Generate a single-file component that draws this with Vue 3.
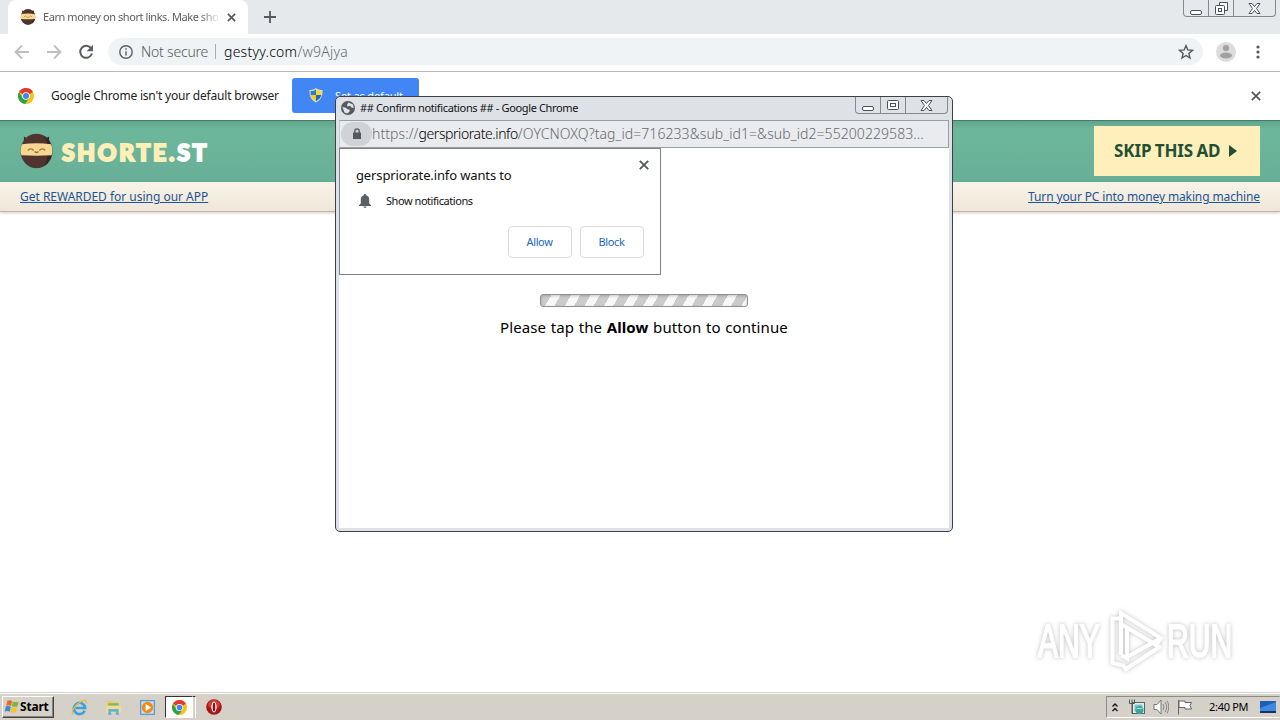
<template>
  <div class="desktop">
    <!-- main browser window -->
    <div class="tab-strip">
      <div class="tab">
        <svg class="tab-icon" viewBox="0 0 34 36">
          <use href="#ninja" />
        </svg>
        <span class="tab-title">Earn money on short links. Make sho</span>
        <svg class="tab-close" viewBox="0 0 10 10"><path d="M1 1l8 8M9 1L1 9" /></svg>
      </div>
      <svg class="tab-new" viewBox="0 0 12 12"><path d="M6 0v12M0 6h12" /></svg>
      <div class="win-buttons">
        <span class="wb wb-min"><svg viewBox="0 0 13 13"><rect x=".5" y="8.5" width="11" height="4" rx="1.5" /></svg></span>
        <span class="wb wb-max"><svg viewBox="0 0 13 13"><path d="M4.5 3V.5h8v8H10" /><rect x=".5" y="3.5" width="9" height="9" rx="1" /><rect x="3.5" y="6.5" width="3" height="3" /></svg></span>
        <span class="wb wb-close"><svg viewBox="0 0 13 13"><path :d="closeGlyph" /></svg></span>
      </div>
    </div>

    <div class="toolbar">
      <svg class="nav nav-off" viewBox="0 0 16 16"><path d="M15 8H2M8 1.5L1.5 8 8 14.5" /></svg>
      <svg class="nav nav-off" viewBox="0 0 16 16"><path d="M1 8h13M8 1.5L14.5 8 8 14.5" /></svg>
      <svg class="nav nav-reload" viewBox="0 0 16 16">
        <path d="M13.2 4.4A6 6 0 1 0 14 9.5" />
        <path class="fill" d="M15 .8v6.4H8.6z" />
      </svg>
      <div class="omnibox">
        <svg class="info-icon" viewBox="0 0 14 14"><circle cx="7" cy="7" r="6.2" /><path d="M7 6.2v4.3M7 3.3v1.5" /></svg>
        <span class="t-secure">Not secure</span>
        <i class="divider"></i>
        <span class="t-url"><b>gestyy.com</b>/w9Ajya</span>
        <svg class="star" viewBox="0 0 16 16"><path d="M8 1.6l1.8 4.3 4.7.4-3.6 3.1 1.1 4.6L8 11.5 4 14l1.1-4.6L1.5 6.3l4.7-.4z" /></svg>
      </div>
      <svg class="avatar" viewBox="0 0 20 20">
        <circle cx="10" cy="10" r="10" fill="#dcdcdc" />
        <circle cx="10" cy="6" r="3.1" fill="#a0a0a0" />
        <ellipse cx="10" cy="13.5" rx="6" ry="3" fill="#a0a0a0" />
      </svg>
      <svg class="kebab" viewBox="0 0 4 14"><circle cx="2" cy="2" r="1.6" /><circle cx="2" cy="7" r="1.6" /><circle cx="2" cy="12" r="1.6" /></svg>
    </div>

    <div class="infobar">
      <svg class="chrome-logo" viewBox="0 0 16 16"><use href="#chrome" /></svg>
      <span class="t-info">Google Chrome isn't your default browser</span>
      <div class="default-btn">
        <svg class="shield" viewBox="0 0 14 15">
          <path d="M7 0c2 1.5 4 2 6.5 2 .3 6-1.500 10-6.500 12.500C2 12 .2 8 .5 2 3 2 5 1.500 7 0z" fill="#d9dcc8" />
          <path d="M7 1.500V7H1.600V3C4 3 5.500 2.500 7 1.500z" fill="#2e7dc9" />
          <path d="M7 1.500V7h5.400V3C10 3 8.500 2.500 7 1.500z" fill="#ffd42f" />
          <path d="M7 7v6.200C4 11.500 2.200 9.500 1.700 7z" fill="#f8cb22" />
          <path d="M7 7v6.200c3-1.700 4.800-3.700 5.300-6.200z" fill="#2467ae" />
        </svg>
        <span class="t-default">Set as default</span>
      </div>
      <svg class="info-close" viewBox="0 0 10 10"><path d="M.8.8l8.400 8.400M9.200.8L.8 9.200" /></svg>
    </div>

    <header class="site-head">
      <svg class="ninja-logo" viewBox="0 0 34 36"><use href="#ninja" /></svg>
      <span class="brand">SHORTE.<em>ST</em></span>
      <div class="skip">
        <span class="t-skip">SKIP THIS AD</span>
        <svg viewBox="0 0 8 12"><path d="M0 0l8 6-8 6z" /></svg>
      </div>
    </header>
    <div class="site-links">
      <a class="t-get">Get REWARDED for using our APP</a>
      <a class="t-turn">Turn your PC into money making machine</a>
    </div>
    <main class="page"></main>

    <!-- taskbar -->
    <footer class="taskbar">
      <div class="start">
        <svg viewBox="0 0 17 15">
          <path d="M3.500 1.500C5.500.5 7 .8 8.600 1.800L7.400 7C5.800 6 4.200 6 2.300 6.700z" fill="#e8672a" />
          <path d="M9.400 2.200c2 1 4 1 6.300 0l-1.400 5c-2 1-4 .8-6 0z" fill="#7fb539" />
          <path d="M2 7.600c2-.8 3.600-.6 5.200.3L6 13C4.300 12 2.700 12 .8 12.800z" fill="#3b86d2" />
          <path d="M8 8.300c2 .9 4 .9 6.100 0l-1.400 5c-2.200 1-4 .8-6 0z" fill="#f6c12b" />
        </svg>
        <span>Start</span>
      </div>
      <svg class="task" viewBox="0 0 18 18">
        <path d="M14.500 12.500A6 6 0 1 1 15 9.500H5" fill="none" stroke="#39a2de" stroke-width="2.8" />
        <path d="M2 16.500C-.5 13 5 5.500 11 2.500c4-2 6-1 4.700 2" fill="none" stroke="#e9b93b" stroke-width="1.3" />
      </svg>
      <svg class="task" viewBox="0 0 18 18">
        <path d="M2 2h5l1 1.500h7V14H2z" fill="#eec95e" />
        <path d="M3.500 4.500h11V8h-11z" fill="#7db96a" />
        <path d="M1 7h16v7.500H1z" fill="#f5dc8c" />
        <path d="M3.500 17v-6.500h11V17h-3v-3.500h-5V17z" fill="#62b4df" />
      </svg>
      <svg class="task" viewBox="0 0 18 18">
        <rect x="1" y="1" width="16" height="16" fill="#5d9fd4" /><rect x="2.5" y="2.5" width="13" height="13" fill="#cfe2f2" />
        <circle cx="9" cy="9" r="6" fill="#f18a16" /><path d="M7 5.300L13 9l-6 3.700z" fill="#fff" />
      </svg>
      <div class="task-active"><svg viewBox="0 0 16 16"><use href="#chrome" /></svg></div>
      <i class="task-stack"></i>
      <svg class="task opera" viewBox="0 0 16 16">
        <circle cx="8" cy="8" r="7.8" fill="#a91616" /><ellipse cx="8" cy="5.5" rx="6" ry="4.5" fill="#cf3c36" />
        <ellipse cx="8" cy="8" rx="2.6" ry="5.4" fill="#fff" /><ellipse cx="8" cy="8" rx="1.3" ry="4.6" fill="#8f1010" />
      </svg>
      <div class="tray">
        <svg class="chev" viewBox="0 0 8 10"><path d="M1.500 4L4 1.500 6.500 4M1.500 8.500L4 6l2.500 2.500" /></svg>
        <svg class="net" viewBox="0 0 16 16">
          <rect x="3.5" y="3.5" width="12" height="11" fill="#e8eeee" stroke="#47686e" /><rect x="5.5" y="5.5" width="8" height="7" fill="#7fc5c4" />
          <path d="M.5.5v4h5v-4M3 .5v4M3 4.500V14.500h4" fill="none" stroke="#555" />
          <circle cx="10.5" cy="11" r="4" fill="#3aa49e" /><path d="M7.500 10c2-2 3 1 6-1" fill="none" stroke="#c8eee2" />
        </svg>
        <svg class="vol" viewBox="0 0 16 16">
          <path d="M1 5.500h3L8 1v14l-4-4.500H1z" fill="#fff" stroke="#777" /><path d="M10 5q2 3 0 6M12 3q3.500 5 0 10M14 1.500q3.500 6.500 0 13" fill="none" stroke="#888" />
        </svg>
        <svg class="flag" viewBox="0 0 16 16"><path d="M1.500 1v14.500M2 2h6v1.500h6.500L13 6.500l1.500 3.500H8V8.500H2z" fill="#fff" stroke="#666" /></svg>
        <span class="t-clock">2:40 PM</span>
        <svg class="desk" viewBox="0 0 16 14"><path d="M0 1h16v10H0z" fill="#1c5fb5" /><path d="M0 8L16 2v9H0z" fill="#3e8ae0" /><path d="M0 11h16v2H0z" fill="#17335f" /></svg>
      </div>
    </footer>

    <!-- watermark -->
    <div class="watermark">
      <span>ANY</span>
      <svg viewBox="0 0 60 64">
        <path d="M14 46V4l40 25-5 7-35-21" />
        <path d="M14 9.500H5.500V54l9 2M14 46l6 3V20M20 48l34-19M15 55l4 5 35-23" />
      </svg>
      <span>RUN</span>
    </div>

    <!-- popup window -->
    <section class="popup">
      <div class="popup-title">
        <svg class="globe" viewBox="0 0 14 14">
          <circle cx="7" cy="7" r="7" fill="#55585c" />
          <path d="M7.500 1.500L12 3.500l.8 3.500-2.300-.5L9 4.800 6.500 5.500 6 3.500zM1.300 6l3 .5 2 1.500 2.700 1-.8 2L6 12.500 3.500 11.500z" fill="#dfe2e7" />
        </svg>
        <span class="t-popup">## Confirm notifications ## - Google Chrome</span>
        <div class="win-buttons popup-buttons">
          <span class="wb wb-min"><svg viewBox="0 0 13 13"><rect x=".5" y="7.5" width="11" height="4" rx="1.5" /></svg></span>
          <span class="wb wb-max"><svg viewBox="0 0 13 13"><rect x=".5" y="1.5" width="11" height="9" rx="1" /><rect x="3.5" y="4.5" width="5" height="3" /></svg></span>
          <span class="wb wb-close"><svg viewBox="0 0 13 13"><path :d="closeGlyph" /></svg></span>
        </div>
      </div>
      <div class="popup-address">
        <span class="lock"><svg viewBox="0 0 10 12"><path d="M1 4.500h8V11H1z" fill="#55585c" /><path d="M2.800 5V3a2.200 2.200 0 0 1 4.400 0v2" fill="none" stroke="#55585c" stroke-width="1.3" /></svg></span>
        <span class="t-addr">https://<b>gerspriorate.info</b>/OYCNOXQ?tag_id=716233&amp;sub_id1=&amp;sub_id2=55200229583...</span>
      </div>
      <div class="popup-body">
        <div class="progress"></div>
        <p class="t-please">Please tap the <b>Allow</b> button to continue</p>
        <div class="prompt">
          <div class="prompt-head">
            <span class="t-wants">gerspriorate.info wants to</span>
            <svg viewBox="0 0 10 10"><path d="M.8.8l8.400 8.400M9.200.8L.8 9.200" /></svg>
          </div>
          <div class="prompt-row">
            <svg viewBox="0 0 12 14"><path d="M6 0c.8 0 1.200.5 1.200 1.200C9.200 1.800 10.200 3.500 10.200 5.500V9.500L12 11.300V12H0v-.7L1.800 9.500v-4c0-2 1-3.700 3-4.300C4.800.5 5.200 0 6 0zM4.500 12.600h3C7.500 13.500 7 14 6 14s-1.500-.5-1.500-1.400z" /></svg>
            <span class="t-show">Show notifications</span>
          </div>
          <div class="prompt-actions">
            <button type="button">Allow</button>
            <button type="button">Block</button>
          </div>
        </div>
      </div>
    </section>

    <!-- shared symbols -->
    <svg class="defs" aria-hidden="true">
      <symbol id="ninja" viewBox="0 0 34 36">
        <path d="M4 9V3l5 3zM30 9V3l-5 3z" fill="#3b2824" />
        <ellipse cx="17" cy="18" rx="16.5" ry="17.8" fill="#50352e" />
        <path d="M25 2.500c11 7 11 24 0 31 5-10 5-22 0-31z" fill="#39241f" />
        <path d="M2 11q15-2 30 0 2.500 6 .5 11.500-15.500 1-31 0Q-.5 17 2 11z" fill="#f8d890" />
        <path d="M8 17.500q3-3.500 6 0M20 17.500q3-3.500 6 0M15 18.500q2 2 4 0" fill="none" stroke="#9b6e44" stroke-width="1.3" />
      </symbol>
      <symbol id="chrome" viewBox="0 0 16 16">
        <circle cx="8" cy="8" r="8" fill="#fbc116" />
        <path d="M8 8L1.070 4A8 8 0 0 1 14.930 4z" fill="#e33b2e" />
        <path d="M1.070 4A8 8 0 0 0 7 15.940L11.400 10 4.600 10z" fill="#2ba24c" />
        <circle cx="8" cy="8" r="3.8" fill="#fff" />
        <circle cx="8" cy="8" r="3" fill="#4285f4" />
      </symbol>
    </svg>
  </div>
</template>

<script setup>
// outlined X used by both window frames
const closeGlyph = 'M1 1.5h3l2.5 3 2.5-3h3l-3.5 5 3.5 5H9l-2.5-3-2.5 3H1l3.5-5z'
</script>

<style>
body {
  background: #fff;
  overflow: hidden;
}
</style>

<style scoped>
.desktop {
  position: relative;
  display: flex;
  flex-direction: column;
  width: 1280px;
  height: 720px;
  overflow: hidden;
  background: #fff;
  color: #222;
  font-family: 'Noto Sans', 'Open Sans', sans-serif;
  font-size: 11px;
  white-space: nowrap;
}
.desktop * {
  box-sizing: border-box;
}
svg {
  display: block;
  flex: none;
}
.defs {
  position: absolute;
  width: 0;
  height: 0;
}

/* tab strip */
.tab-strip {
  display: flex;
  height: 34px;
  background: #e6e9ec;
}
.tab {
  display: flex;
  align-items: center;
  width: 240px;
  margin-left: 8px;
  padding: 0 11px 0 12px;
  background: #fff;
  border-radius: 8px 8px 0 0;
}
.tab-icon {
  width: 16px;
  height: 16px;
  margin-right: 7px;
}
.tab-title {
  width: 178px;
  padding-bottom: 1px;
  color: #5a5d61;
  letter-spacing: -0.43px;
  -webkit-mask-image: linear-gradient(90deg, #000 88%, transparent);
  mask-image: linear-gradient(90deg, #000 88%, transparent);
}
.tab-close {
  width: 9px;
  height: 9px;
  margin-left: 6px;
}
.tab-close path,
.tab-new path,
.info-close path,
.prompt-head path {
  fill: none;
  stroke: #55585c;
  stroke-width: 1.8;
}
.tab-new {
  width: 12px;
  height: 12px;
  margin: 11px 0 0 16px;
}
.win-buttons {
  display: flex;
  height: 17px;
  margin: 0 4px 0 auto;
  border: 1px solid #85898e;
  border-top: 0;
  border-radius: 0 0 4px 4px;
}
.wb {
  display: flex;
  align-items: center;
  justify-content: center;
  width: 25px;
  border-left: 1px solid #85898e;
}
.wb-min {
  width: 24px;
  border-left: 0;
}
.wb-close {
  width: 42px;
}
.wb svg {
  width: 13px;
  height: 13px;
  fill: #fff;
  stroke: #4a4f59;
}

/* toolbar */
.toolbar {
  display: flex;
  align-items: center;
  height: 38px;
  padding: 0 20px 2px 14px;
  border-bottom: 1px solid #b7b9b7;
}
.nav {
  width: 16px;
  height: 16px;
  margin-right: 16px;
  fill: none;
  stroke: #5b5e62;
  stroke-width: 1.8;
}
.nav-off {
  stroke: #bdbfc1;
}
.nav-reload {
  margin-right: 14px;
  stroke-width: 2;
}
.nav-reload .fill {
  fill: #5b5e62;
  stroke: none;
}
.omnibox {
  display: flex;
  align-items: center;
  width: 1095px;
  height: 27px;
  padding: 0 9px 0 11px;
  border-radius: 14px;
  background: #f0f3f5;
  font-size: 14px;
  font-weight: 300;
  color: #55585c;
}
.info-icon {
  width: 14px;
  height: 14px;
  margin-right: 8px;
  fill: none;
  stroke: #5b5e62;
  stroke-width: 1.4;
}
.t-secure {
  width: 67px;
  letter-spacing: -0.2px;
}
.divider {
  width: 1px;
  height: 15px;
  margin: 0 8px 0 7px;
  background: #aaadb0;
}
.t-url {
  color: #66696d;
  letter-spacing: 0.25px;
}
.t-url b {
  font-weight: 300;
  color: #000;
}
.star {
  width: 16px;
  height: 16px;
  margin-left: auto;
  fill: none;
  stroke: #55585c;
  stroke-width: 1.4;
}
.avatar {
  width: 20px;
  height: 20px;
  margin-left: 13px;
}
.kebab {
  width: 4px;
  height: 14px;
  margin-left: auto;
  fill: #55585c;
}

/* default browser bar */
.infobar {
  display: flex;
  align-items: center;
  height: 48px;
  padding: 0 19px 1px 18px;
}
.chrome-logo {
  width: 16px;
  height: 16px;
  margin-right: 17px;
}
.t-info {
  width: 228px;
  font-size: 12px;
  letter-spacing: -0.2px;
}
.default-btn {
  display: flex;
  align-items: center;
  width: 127px;
  height: 35px;
  margin-left: 13px;
  padding: 0 0 1px 17px;
  border-radius: 3px;
  background: #4285f4;
  color: #fff;
}
.t-default {
  letter-spacing: -0.15px;
}
.shield {
  width: 14px;
  height: 15px;
  margin-right: 12px;
}
.info-close {
  width: 10px;
  height: 10px;
  margin-left: auto;
}

/* site */
.site-head {
  display: flex;
  align-items: center;
  height: 62px;
  padding: 0 20px 2px;
  border-top: 1px solid #477b69;
  background: linear-gradient(#5fa58c, #6db79d 8px, #67b097);
}
.ninja-logo {
  width: 33px;
  height: 36px;
}
.brand {
  margin: 2px 0 0 9px;
  color: #fdefb6;
  font: 900 23px/30px Lato, sans-serif;
  letter-spacing: 2.7px;
  -webkit-text-stroke: 2px currentColor;
}
.brand em {
  font-style: normal;
  color: #fff;
}
.skip {
  display: flex;
  align-items: center;
  width: 166px;
  height: 50px;
  margin-left: auto;
  padding-left: 20px;
  background: #ffefba;
  color: #234f35;
  font-weight: 700;
  font-size: 17px;
}
.t-skip {
  width: 107px;
  letter-spacing: -0.1px;
  word-spacing: -1px;
}
.skip svg {
  width: 8px;
  height: 12px;
  margin-left: 8px;
  fill: #234f35;
}
.site-links {
  display: flex;
  align-items: center;
  justify-content: space-between;
  height: 30px;
  padding: 0 20px;
  border-bottom: 1px solid #bfb5a7;
  background: linear-gradient(#f8f4e8, #efe6d8);
  box-shadow: 0 1px 3px rgba(0, 0, 0, 0.2);
  font-size: 12px;
}
.site-links a {
  color: #1d5496;
  text-decoration: underline;
}
.t-get {
  letter-spacing: -0.02px;
}
.t-turn {
  letter-spacing: -0.12px;
}
.page {
  flex: 1;
}

/* taskbar */
.taskbar {
  display: flex;
  align-items: center;
  height: 28px;
  padding: 1px 0 0 2px;
  border-top: 1px solid #d6d3ce;
  background: #d5d1c9;
  box-shadow: inset 0 1px #fff;
}
.start {
  display: flex;
  align-items: center;
  width: 52px;
  height: 22px;
  padding: 0 0 1px 1px;
  border: 1px solid;
  border-color: #fff #444 #444 #fff;
  box-shadow: inset -1px -1px #87847e;
  color: #000;
  font-weight: 700;
  font-size: 12px;
  letter-spacing: -0.2px;
}
.start svg {
  width: 16px;
  height: 15px;
}
.task {
  width: 17px;
  height: 17px;
  margin-left: 17px;
}
.task-active {
  display: flex;
  align-items: center;
  justify-content: center;
  width: 28px;
  height: 22px;
  margin-left: 9px;
  border: 1px solid;
  border-color: #333 #fff #fff #333;
  background: #fff;
}
.task-active svg {
  width: 15px;
  height: 15px;
}
.task-stack {
  width: 3px;
  height: 22px;
  border-top: 1px solid #333;
  border-right: 1px solid #fff;
}
.task.opera {
  width: 16px;
  height: 16px;
  margin-left: 10px;
}
.tray {
  display: flex;
  align-items: center;
  width: 174px;
  height: 22px;
  margin-left: auto;
  padding-left: 4px;
  border: 1px solid;
  border-color: #8e8b85 #d5d1c9 #fff #8e8b85;
  color: #000;
}
.chev {
  width: 8px;
  height: 11px;
  fill: none;
  stroke: #111;
  stroke-width: 1.3;
}
.net {
  width: 16px;
  height: 16px;
  margin-left: 10px;
}
.vol,
.flag {
  width: 16px;
  height: 16px;
  margin-left: 8px;
}
.t-clock {
  width: 40px;
  margin-left: 16px;
  padding-bottom: 1px;
  letter-spacing: -0.3px;
}
.desk {
  width: 16px;
  height: 14px;
  margin-left: 11px;
}

/* watermark */
.watermark {
  position: absolute;
  left: 1038px;
  top: 608px;
  display: flex;
  align-items: center;
  height: 66px;
  color: #fff;
  filter: drop-shadow(0 0 2px rgba(0, 0, 0, 0.25));
  font: 400 47px/66px 'Liberation Sans', sans-serif;
}
.watermark span {
  width: 64px;
  transform: scaleX(0.64);
  transform-origin: 0 50%;
  -webkit-text-stroke: 2px #fff;
}
.watermark svg {
  width: 60px;
  height: 64px;
  margin: 0 0 0 5px;
  fill: none;
  stroke: #fff;
  stroke-width: 4;
}

/* popup */
.popup {
  position: absolute;
  left: 335px;
  top: 96px;
  display: flex;
  flex-direction: column;
  width: 618px;
  height: 436px;
  padding: 0 3px 3px;
  border: 1px solid #3d4144;
  border-radius: 5px;
  background: #dee1e6;
}
.popup-title {
  display: flex;
  align-items: center;
  height: 23px;
  padding: 0 0 2px 2px;
  color: #111;
}
.t-popup {
  letter-spacing: -0.35px;
}
.globe {
  width: 14px;
  height: 14px;
  margin-right: 5px;
}
.popup-buttons {
  align-self: flex-start;
  margin-right: 1px;
}
.popup-address {
  display: flex;
  align-items: center;
  height: 28px;
  padding-bottom: 1px;
  border: 1px solid #9b9ea2;
  border-left-color: #c9cccf;
  background: #e9ebee;
  font-size: 14px;
  font-weight: 300;
  color: #66696d;
}
.t-addr {
  letter-spacing: 0.07px;
}
.popup-address b {
  font-weight: 300;
  letter-spacing: -0.42px;
  color: #000;
}
.lock {
  display: flex;
  align-items: center;
  justify-content: center;
  width: 31px;
  height: 24px;
  margin-left: 1px;
  border-radius: 12px;
  background: #d0d2d5;
}
.lock svg {
  width: 10px;
  height: 12px;
}
.popup-body {
  position: relative;
  display: flex;
  flex: 1;
  flex-direction: column;
  align-items: center;
  padding-top: 146px;
  background: #fff;
}
.progress {
  width: 208px;
  height: 13px;
  border: 1px solid #929292;
  border-radius: 3px;
  background: repeating-linear-gradient(120deg, #cbcbcb 0 9px, #f8f8f8 9px 17px);
  box-shadow: inset 0 1px 3px rgba(0, 0, 0, 0.2);
}
.t-please {
  margin: 9px 0 0;
  color: #000;
  font-size: 15px;
  line-height: 22px;
  letter-spacing: 0.1px;
  word-spacing: 0.6px;
}
.prompt {
  position: absolute;
  left: 0;
  top: 0;
  display: flex;
  flex-direction: column;
  width: 322px;
  height: 127px;
  padding: 10px 16px 16px;
  border: 1px solid #7e8286;
  background: #fff;
  color: #111;
}
.prompt-head {
  display: flex;
  justify-content: space-between;
  height: 32px;
  font-size: 13px;
}
.t-wants {
  line-height: 32px;
  letter-spacing: -0.13px;
}
.prompt-head svg {
  width: 10px;
  height: 10px;
  margin: 1px -5px 0 0;
}
.prompt-row {
  display: flex;
  align-items: center;
  height: 20px;
  padding-left: 3px;
}
.prompt-row svg {
  width: 12px;
  height: 14px;
  margin-right: 15px;
  fill: #5c5f63;
}
.t-show {
  padding-bottom: 2px;
  letter-spacing: -0.45px;
}
.prompt-actions {
  display: flex;
  justify-content: flex-end;
  gap: 8px;
  margin-top: auto;
}
.prompt-actions button {
  width: 64px;
  height: 32px;
  padding: 0 1px 2px 0;
  border: 1px solid #d9dbdf;
  border-radius: 4px;
  background: #fff;
  color: #1a66c8;
  font: inherit;
  letter-spacing: -0.35px;
}
</style>
